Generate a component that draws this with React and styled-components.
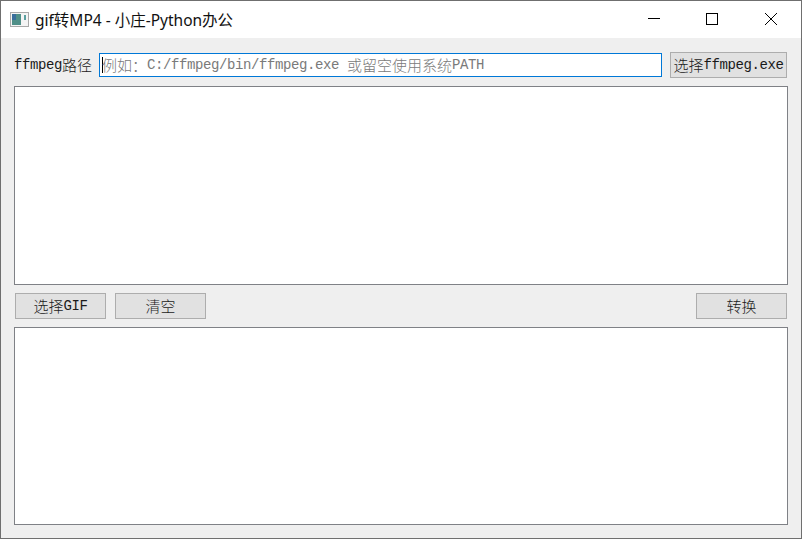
import React from 'react'
import styled, { createGlobalStyle } from 'styled-components'

const GlobalStyle = createGlobalStyle`
    html, body {
        margin: 0;
        padding: 0;
        background: #efefef;
    }
    * {
        box-sizing: border-box;
    }
`

const Window = styled.div`
    width: 802px;
    height: 539px;
    display: flex;
    flex-direction: column;
    background: #efefef;
    border: 1px solid #6f6f6f;
    overflow: hidden;
`

const TitleBar = styled.div`
    height: 37px;
    flex-shrink: 0;
    display: flex;
    align-items: center;
    background: #ffffff;
    padding: 0 1px 0 9px;
`

const AppIcon = styled.svg`
    width: 20px;
    height: 16px;
    margin-right: 5px;
`

const Title = styled.div`
    flex: 1;
    font-family: 'Noto Sans', 'Noto Sans CJK SC', sans-serif;
    font-size: 15.5px;
    color: #111111;
    white-space: nowrap;
`

const WindowButton = styled.div`
    width: 58px;
    height: 35px;
    align-self: flex-start;
    margin-left: ${(props) => props.$gap || 0}px;
    display: flex;
    align-items: center;
    justify-content: center;
`

const Content = styled.div`
    flex: 1;
    display: flex;
    flex-direction: column;
    gap: 8px;
    padding: 14px 13px 12px 13px;
`

const Row = styled.div`
    display: flex;
    align-items: center;
    height: 26px;
    flex-shrink: 0;
`

const Label = styled.div`
    width: 85px;
    flex-shrink: 0;
    display: flex;
    align-items: center;
    color: #1a1a1a;
`

const Input = styled.div`
    width: 563px;
    height: 24px;
    margin-right: 8px;
    display: flex;
    align-items: center;
    padding-left: 3px;
    background: #ffffff;
    border: 1px solid #0078d7;
    color: #7a7a7a;
    white-space: nowrap;
    overflow: hidden;
`

const Caret = styled.span`
    width: 1px;
    height: 16px;
    margin: 0 -1px;
    background: #000000;
`

const Button = styled.div`
    width: ${(props) => props.$width}px;
    height: 26px;
    margin-left: ${(props) => props.$gap || 0}px;
    display: flex;
    align-items: center;
    justify-content: center;
    background: #e1e1e1;
    border: 1px solid #adadad;
    color: #1a1a1a;
    white-space: nowrap;
`

const Spacer = styled.div`
    flex: 1;
`

const TextBox = styled.div`
    width: 774px;
    height: ${(props) => props.$height}px;
    flex-shrink: 0;
    background: #ffffff;
    border: 1px solid #7f8186;
`

const ButtonRow = styled(Row)`
    padding: 0 1px;
`

const Cjk = styled.span`
    font-family: 'Noto Sans CJK SC', sans-serif;
    font-size: 15px;
    font-weight: 300;
    line-height: 16px;
`

const Mono = styled.span`
    font-family: 'Liberation Mono', monospace;
    font-size: 14px;
    letter-spacing: -0.4px;
    line-height: 16px;
`

const App = () => (
    <>
        <GlobalStyle />
        <Window>
            <TitleBar>
                <AppIcon viewBox="0 0 20 16">
                    <rect x="0.5" y="0.5" width="18" height="14" fill="#f4f4f4" stroke="#a9a9a9" />
                    <rect x="2" y="2" width="9" height="11" fill="#4f8f88" />
                    <rect x="2" y="2" width="4" height="6" fill="#3a6f9c" />
                    <rect x="14" y="3" width="2" height="5" fill="#5b9fa0" />
                </AppIcon>
                <Title>gif转MP4 - 小庄-Python办公</Title>
                <WindowButton>
                    <svg width="12" height="12" viewBox="0 0 12 12">
                        <path d="M0 5.5h12" stroke="#000" fill="none" />
                    </svg>
                </WindowButton>
                <WindowButton>
                    <svg width="12" height="12" viewBox="0 0 12 12">
                        <rect x="0.5" y="0.5" width="11" height="11" stroke="#000" fill="none" />
                    </svg>
                </WindowButton>
                <WindowButton $gap={1}>
                    <svg width="12" height="12" viewBox="0 0 12 12">
                        <path d="M0 0l12 12M12 0L0 12" stroke="#000" fill="none" />
                    </svg>
                </WindowButton>
            </TitleBar>
            <Content>
                <Row>
                    <Label>
                        <Mono>ffmpeg</Mono>
                        <Cjk>路径</Cjk>
                    </Label>
                    <Input>
                        <Caret />
                        <Cjk>例如：</Cjk>
                        <Mono>C:/ffmpeg/bin/ffmpeg.exe&nbsp;</Mono>
                        <Cjk>或留空使用系统</Cjk>
                        <Mono>PATH</Mono>
                    </Input>
                    <Button $width={117}>
                        <Cjk>选择</Cjk>
                        <Mono>ffmpeg.exe</Mono>
                    </Button>
                </Row>
                <TextBox $height={199} />
                <ButtonRow>
                    <Button $width={91}>
                        <Cjk>选择</Cjk>
                        <Mono>GIF</Mono>
                    </Button>
                    <Button $width={91} $gap={9}>
                        <Cjk>清空</Cjk>
                    </Button>
                    <Spacer />
                    <Button $width={91}>
                        <Cjk>转换</Cjk>
                    </Button>
                </ButtonRow>
                <TextBox $height={198} />
            </Content>
        </Window>
    </>
)

export default App
